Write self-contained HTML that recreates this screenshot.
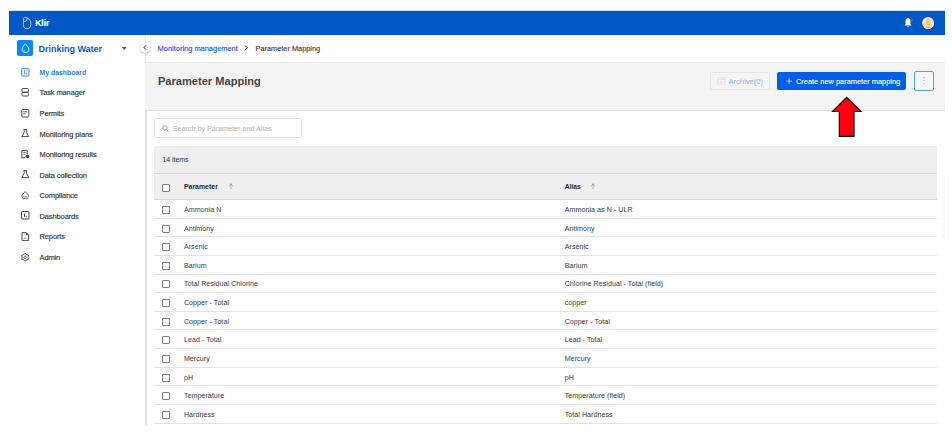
<!DOCTYPE html>
<html>
<head>
<meta charset="utf-8">
<style>
*{box-sizing:border-box;margin:0;padding:0}
html,body{width:952px;height:442px;overflow:hidden;background:#fff}
body{position:relative;font-family:"Liberation Sans",sans-serif;color:#333}
.a{position:absolute}
.t{position:absolute;white-space:nowrap;line-height:10px}
#hdr{left:9px;top:11px;width:936px;height:24px;background:#0058c6;box-shadow:0 -1px 0 rgba(0,88,198,0.2)}
#side{left:9px;top:34.5px;width:136.5px;height:390.5px;background:#fff;border-right:1px solid #e6e6e6}
#dwbox{left:16.8px;top:40px;width:16px;height:16px;background:#0588ff;border-radius:2px}
.nav{position:absolute;left:39.5px;font-size:7.5px;letter-spacing:-0.12px;color:#3a3a3a;-webkit-text-stroke:0.18px #3a3a3a}
.ico{overflow:visible;position:absolute;left:20.5px;width:8.5px;height:8.5px}
#pghdr{left:145px;top:62px;width:800px;height:49px;background:#f4f4f4;border-bottom:1px solid #dcdcdc;border-top:1px solid #ebebeb}
#content{left:145px;top:110.5px;width:800px;height:314.5px;background:#fff;border-left:2px solid #e3e3e3}
#search{left:154.2px;top:118.2px;width:147.4px;height:19.5px;border:1px solid #e2e2e2;border-radius:2.5px;background:#fff}
#tblhead{left:154px;top:145.8px;width:783px;height:53.5px;background:#efefef}
.hl{position:absolute;left:154px;width:783px;height:1px;background:#d5d5d5}
.rl{position:absolute;left:154px;width:783px;height:1px;background:#e3e3e3}
.cb{position:absolute;left:162px;width:8px;height:8px;border:1px solid #808080;border-radius:1px;background:#fff}
.cell{position:absolute;font-size:7.1px;letter-spacing:0.05px;color:#3a3a3a;white-space:nowrap;line-height:10px}
</style>
</head>
<body>
<!-- header -->
<div id="hdr" class="a"></div>
<svg class="a" style="left:22px;top:16px" width="10.5" height="14" viewBox="0 0 10.5 14">
  <path d="M1.7 5.2 C1.2 4 1.3 2.4 1.9 1.8 C2.6 1.2 4.2 1.2 4.8 1.8 C5.3 2.5 5.1 4.2 4.6 4.8 C3.9 5.4 2.4 5.5 1.7 5.2 Z" fill="none" stroke="#fff" stroke-width="0.7"/>
  <path d="M4.8 1.8 C7.6 2.8 8.9 5.2 8.9 8.2 C8.9 11 7.3 12.8 5 12.8 C2.8 12.8 1.4 11.2 1.4 8.4 C1.4 7.2 1.5 6 1.7 5.2" fill="none" stroke="#fff" stroke-width="0.7"/>
</svg>
<div class="t" style="left:35.3px;top:18px;font-weight:bold;font-size:8.4px;letter-spacing:0px;color:#fff;-webkit-text-stroke:0.2px #fff">Klir</div>
<!-- bell -->
<svg class="a" style="left:903.2px;top:17px" width="10" height="11" viewBox="0 0 10 11">
  <path d="M5 1.1 C3.5 1.1 2.5 2.6 2.5 4.3 L2.5 7 L1.6 8.6 L8.4 8.6 L7.5 7 L7.5 4.3 C7.5 2.6 6.5 1.1 5 1.1 Z" fill="#fff"/>
  <circle cx="5" cy="9.6" r="0.7" fill="#e9eefa"/>
  <circle cx="8.6" cy="2.7" r="1.25" fill="#e8404a"/>
</svg>
<!-- avatar -->
<svg class="a" style="left:921.8px;top:16.8px" width="12.2" height="12.2" viewBox="0 0 12 12">
  <circle cx="6" cy="6" r="5.9" fill="#f5e6d4"/>
  <path d="M3.2 11.3 C3.4 9.8 4.2 9.1 4.7 8.8 C3.9 8 3.5 6.6 3.6 4.8 C3.7 2.6 4.8 1.7 6 1.7 C7.2 1.7 8.3 2.6 8.4 4.8 C8.5 6.6 8.1 8 7.3 8.8 C7.8 9.1 8.6 9.8 8.8 11.3 C7.6 12 4.4 12 3.2 11.3 Z" fill="#f0c58e"/>
</svg>
<!-- sidebar -->
<div id="side" class="a"></div>
<div id="dwbox" class="a"></div>
<svg class="a" style="left:20.5px;top:43.2px" width="9" height="10.5" viewBox="0 0 9 10.5">
  <path d="M4.3 0.9 C5.6 2.2 7.9 4.3 7.9 6.6 C7.9 8.4 6.4 9.6 4.5 9.6 C2.6 9.6 1.1 8.4 1.1 6.6 C1.1 4.3 3.1 2.2 4.3 0.9 Z" fill="none" stroke="#fff" stroke-width="0.85"/><path d="M2.5 6.9 C2.7 7.8 3.4 8.3 4.2 8.4" fill="none" stroke="#fff" stroke-width="0.6"/>
</svg>
<div class="t" style="left:38.4px;top:44px;font-weight:bold;font-size:9px;color:#0b5cc5">Drinking Water</div>
<svg class="a" style="left:121.8px;top:46.9px" width="4.6" height="3" viewBox="0 0 4.6 3"><path d="M0 0 L4.6 0 L2.3 3 Z" fill="#1060c8"/></svg>

<svg class="ico" style="top:67.50px" viewBox="0 0 8.5 8.5"><rect x="0.5" y="0.5" width="7.5" height="7.5" rx="0.8" fill="#d8e7fc" stroke="#4a92f2" stroke-width="0.95"/><path d="M3.5 2.5 V6" stroke="#4a92f2" stroke-width="0.9"/><circle cx="5.4" cy="5.6" r="0.55" fill="#4a92f2"/></svg>
<div class="t nav" style="top:67.90px;color:#2f80ee;font-weight:bold;font-size:6.9px;letter-spacing:0;-webkit-text-stroke:0">My dashboard</div>
<svg class="ico" style="top:88.06px" viewBox="0 0 8.5 8.5"><rect x="1" y="0.5" width="6.5" height="3.7" rx="1.1" fill="none" stroke="#4a4a4a" stroke-width="1"/><rect x="1" y="4.3" width="6.5" height="3.7" rx="1.1" fill="none" stroke="#4a4a4a" stroke-width="1"/></svg>
<div class="t nav" style="top:88.46px">Task manager</div>
<svg class="ico" style="top:108.62px" viewBox="0 0 8.5 8.5"><rect x="0.8" y="0.5" width="7" height="7.5" rx="0.6" fill="none" stroke="#4a4a4a" stroke-width="1"/><path d="M2.4 2.8 H6.2 M2.4 4.8 H5" stroke="#4a4a4a" stroke-width="0.8"/></svg>
<div class="t nav" style="top:109.02px">Permits</div>
<svg class="ico" style="top:129.18px" viewBox="0 0 8.5 8.5"><path d="M2.6 0.6 H6 M3.2 0.6 V3.2 L0.8 7.6 H7.7 L5.4 3.2 V0.6" fill="none" stroke="#4a4a4a" stroke-width="1" stroke-linejoin="round"/></svg>
<div class="t nav" style="top:129.58px">Monitoring plans</div>
<svg class="ico" style="top:149.74px" viewBox="0 0 8.5 8.5"><path d="M6.2 4 V0.6 H0.8 V7.8 H4.2" fill="none" stroke="#4a4a4a" stroke-width="1"/><path d="M2.2 2.4 H4.8 M2.2 4.2 H4.2" stroke="#4a4a4a" stroke-width="0.8"/><circle cx="6.4" cy="6.4" r="1.8" fill="#444"/></svg>
<div class="t nav" style="top:150.14px">Monitoring results</div>
<svg class="ico" style="top:170.30px" viewBox="0 0 8.5 8.5"><path d="M2.6 0.6 H6 M3.2 0.6 V3.2 L0.8 7.6 H7.7 L5.4 3.2 V0.6" fill="none" stroke="#4a4a4a" stroke-width="1" stroke-linejoin="round"/></svg>
<div class="t nav" style="top:170.70px">Data collection</div>
<svg class="ico" style="top:190.86px" viewBox="0 0 8.5 8.5"><path d="M4.2 0.5 L6.9 3.5 C7.6 4.3 7.6 5.7 7 6.5 L5.7 8.1 L4.2 6.9 L2.7 8.1 L1.4 6.5 C0.8 5.7 0.8 4.3 1.5 3.5 Z" fill="none" stroke="#4a4a4a" stroke-width="0.85" stroke-linejoin="round"/><path d="M2.2 5.6 L3.2 6.3 L4.2 5.4 L5.2 6.3 L6.2 5.6" fill="none" stroke="#4a4a4a" stroke-width="0.7"/></svg>
<div class="t nav" style="top:191.26px">Compliance</div>
<svg class="ico" style="top:211.42px" viewBox="0 0 8.5 8.5"><rect x="0.5" y="0.5" width="7.5" height="7.5" rx="0.6" fill="none" stroke="#4a4a4a" stroke-width="1"/><path d="M3.5 2.5 V6" stroke="#4a4a4a" stroke-width="1"/><circle cx="5.4" cy="5.6" r="0.55" fill="#4a4a4a"/></svg>
<div class="t nav" style="top:211.82px">Dashboards</div>
<svg class="ico" style="top:231.98px" viewBox="0 0 8.5 8.5"><path d="M1 0.6 H5.2 L7.6 3 V8.4 H1 Z" fill="none" stroke="#4a4a4a" stroke-width="1" stroke-linejoin="round"/><path d="M5 0.6 L7.6 3.2 L5 3.2 Z" fill="#4a4a4a"/><path d="M2.8 6.2 H5.6" stroke="#999" stroke-width="1"/></svg>
<div class="t nav" style="top:232.38px">Reports</div>
<svg class="ico" style="top:252.54px" viewBox="0 0 8.5 8.5"><path d="M4.10 0.20 L5.55 1.79 L7.65 2.25 L7.00 4.30 L7.65 6.35 L5.55 6.81 L4.10 8.40 L2.65 6.81 L0.55 6.35 L1.20 4.30 L0.55 2.25 L2.65 1.79 Z" fill="none" stroke="#4a4a4a" stroke-width="0.9" stroke-linejoin="round"/><circle cx="4.1" cy="4.3" r="1.2" fill="none" stroke="#4a4a4a" stroke-width="0.8"/></svg>
<div class="t nav" style="top:252.94px">Admin</div>


<!-- breadcrumb -->
<div class="t" style="left:157.6px;top:44px;font-size:7.45px;color:#1a5ad8;-webkit-text-stroke:0.15px #1a5ad8">Monitoring management</div>
<svg class="a" style="left:244.3px;top:45.4px" width="4.5" height="5.5" viewBox="0 0 4.5 5.5"><path d="M0.8 0.6 L3.6 2.75 L0.8 4.9" fill="none" stroke="#3a3a3a" stroke-width="0.95"/></svg>
<div class="t" style="left:255.5px;top:44px;font-size:7.36px;color:#333;-webkit-text-stroke:0.1px #333">Parameter Mapping</div>

<!-- collapse button -->
<div class="a" style="left:140.2px;top:42.6px;width:10.2px;height:10.2px;border-radius:50%;background:#fff;box-shadow:0 0.6px 1.6px rgba(0,0,0,0.32)"></div>
<svg class="a" style="left:143px;top:45.2px" width="4" height="5" viewBox="0 0 4 5"><path d="M3 0.4 L1 2.5 L3 4.6" fill="none" stroke="#2e2e2e" stroke-width="1"/></svg>

<!-- page header -->
<div id="pghdr" class="a"></div>
<div class="t" style="left:157.9px;top:76px;font-weight:bold;font-size:11.1px;color:#444">Parameter Mapping</div>

<div class="a" style="left:710.3px;top:72px;width:59.3px;height:17.6px;border:1px solid #e6e6e6;border-radius:2px;background:#f5f5f5"></div>
<svg class="a" style="left:717px;top:76.5px" width="8.5" height="8.5" viewBox="0 0 8.5 8.5"><rect x="0.6" y="0.6" width="7.3" height="7.3" rx="0.6" fill="none" stroke="#dedede" stroke-width="0.8"/><path d="M0.6 2.4 H7.9 M4.25 3.8 V6.6 M2.9 5.2 H5.6" stroke="#dedede" stroke-width="0.8"/></svg>
<div class="t" style="left:728.4px;top:77px;font-size:7.59px;color:#8db6ee">Archive(0)</div>

<div class="a" style="left:777.2px;top:71.7px;width:129.2px;height:18.3px;background:#005fe6;border-radius:2px"></div>
<svg class="a" style="left:785.8px;top:77.6px" width="6.2" height="6.2" viewBox="0 0 6.2 6.2"><path d="M3.1 0.2 V6 M0.2 3.1 H6" stroke="#fff" stroke-width="0.65"/></svg>
<div class="t" style="left:796px;top:77px;font-size:7.41px;color:#fff;-webkit-text-stroke:0.12px #fff">Create new parameter mapping</div>

<div class="a" style="left:914.1px;top:71px;width:19.7px;height:19.5px;border:1px solid #5a9cf0;border-radius:2px;background:#f7f7f7"></div>
<svg class="a" style="left:922.8px;top:76px" width="2" height="9" viewBox="0 0 2 9"><circle cx="1" cy="1.4" r="0.6" fill="#7aaaf0"/><circle cx="1" cy="4.5" r="0.6" fill="#7aaaf0"/><circle cx="1" cy="7.6" r="0.6" fill="#7aaaf0"/></svg>

<!-- content -->
<div id="content" class="a"></div>
<div id="search" class="a"></div>
<svg class="a" style="left:161.6px;top:125.2px" width="7" height="7" viewBox="0 0 7 7"><circle cx="2.9" cy="2.9" r="2.2" fill="none" stroke="#7a7a7a" stroke-width="0.7"/><path d="M4.5 4.5 L6.3 6.3" stroke="#7a7a7a" stroke-width="0.7"/></svg>
<div class="t" style="left:172.7px;top:124px;font-size:7.18px;color:#b5b5b5">Search by Parameter and Alias</div>

<div id="tblhead" class="a"></div>
<div class="t" style="left:162.3px;top:155px;font-size:6.96px;color:#333">14 items</div>
<div class="hl" style="top:173px"></div>
<div class="hl" style="top:198.8px"></div>
<div class="cb" style="top:183.8px"></div>
<div class="t" style="left:183.9px;top:182px;font-weight:bold;font-size:6.95px;color:#2a2a2a">Parameter</div>
<svg class="a" style="left:228.5px;top:182.5px" width="4" height="6.5" viewBox="0 0 4 6.5"><path d="M2 0.8 V6 M0.2 3.4 L2 0.8 L3.8 3.4" fill="none" stroke="#a0a0a0" stroke-width="0.8"/></svg>
<div class="t" style="left:564.7px;top:182px;font-weight:bold;font-size:6.78px;color:#2a2a2a">Alias</div>
<svg class="a" style="left:591.1px;top:182.5px" width="4" height="6.5" viewBox="0 0 4 6.5"><path d="M2 0.8 V6 M0.2 3.4 L2 0.8 L3.8 3.4" fill="none" stroke="#a0a0a0" stroke-width="0.8"/></svg>

<div class="cb" style="top:206px"></div>
<div class="cell" style="left:183.9px;top:205px">Ammonia N</div>
<div class="cell" style="left:564.7px;top:205px">Ammonia as N - ULR</div>
<div class="rl" style="top:218px"></div>
<div class="cb" style="top:225px"></div>
<div class="cell" style="left:183.9px;top:224px">Antimony</div>
<div class="cell" style="left:564.7px;top:224px">Antimony</div>
<div class="rl" style="top:236px"></div>
<div class="cb" style="top:243px"></div>
<div class="cell" style="left:183.9px;top:242px">Arsenic</div>
<div class="cell" style="left:564.7px;top:242px">Arsenic</div>
<div class="rl" style="top:255px"></div>
<div class="cb" style="top:262px"></div>
<div class="cell" style="left:183.9px;top:261px">Barium</div>
<div class="cell" style="left:564.7px;top:261px">Barium</div>
<div class="rl" style="top:274px"></div>
<div class="cb" style="top:280px"></div>
<div class="cell" style="left:183.9px;top:279px">Total Residual Chlorine</div>
<div class="cell" style="left:564.7px;top:279px">Chlorine Residual - Total (field)</div>
<div class="rl" style="top:292px"></div>
<div class="cb" style="top:299px"></div>
<div class="cell" style="left:183.9px;top:298px">Copper - Total</div>
<div class="cell" style="left:564.7px;top:298px">copper</div>
<div class="rl" style="top:311px"></div>
<div class="cb" style="top:318px"></div>
<div class="cell" style="left:183.9px;top:317px">Copper - Total</div>
<div class="cell" style="left:564.7px;top:317px">Copper - Total</div>
<div class="rl" style="top:329px"></div>
<div class="cb" style="top:336px"></div>
<div class="cell" style="left:183.9px;top:335px">Lead - Total</div>
<div class="cell" style="left:564.7px;top:335px">Lead - Total</div>
<div class="rl" style="top:348px"></div>
<div class="cb" style="top:355px"></div>
<div class="cell" style="left:183.9px;top:354px">Mercury</div>
<div class="cell" style="left:564.7px;top:354px">Mercury</div>
<div class="rl" style="top:367px"></div>
<div class="cb" style="top:374px"></div>
<div class="cell" style="left:183.9px;top:373px">pH</div>
<div class="cell" style="left:564.7px;top:373px">pH</div>
<div class="rl" style="top:385px"></div>
<div class="cb" style="top:392px"></div>
<div class="cell" style="left:183.9px;top:391px">Temperature</div>
<div class="cell" style="left:564.7px;top:391px">Temperature (field)</div>
<div class="rl" style="top:404px"></div>
<div class="cb" style="top:411px"></div>
<div class="cell" style="left:183.9px;top:410px">Hardness</div>
<div class="cell" style="left:564.7px;top:410px">Total Hardness</div>
<div class="rl" style="top:423px"></div>


<div class="a" style="left:940px;top:176px;width:5px;height:64px;background:linear-gradient(to right,rgba(0,0,0,0),rgba(0,0,0,0.03))"></div>
<!-- red arrow -->
<svg class="a" style="left:830px;top:95px" width="34" height="44" viewBox="830 95 34 44">
  <path d="M846.6 97.4 L861 111.5 L854 111.5 L854 136.4 L839.3 136.4 L839.3 111.5 L832.5 111.5 Z" fill="#ff0010" stroke="#000" stroke-width="1.15"/>
</svg>
</body>
</html>
